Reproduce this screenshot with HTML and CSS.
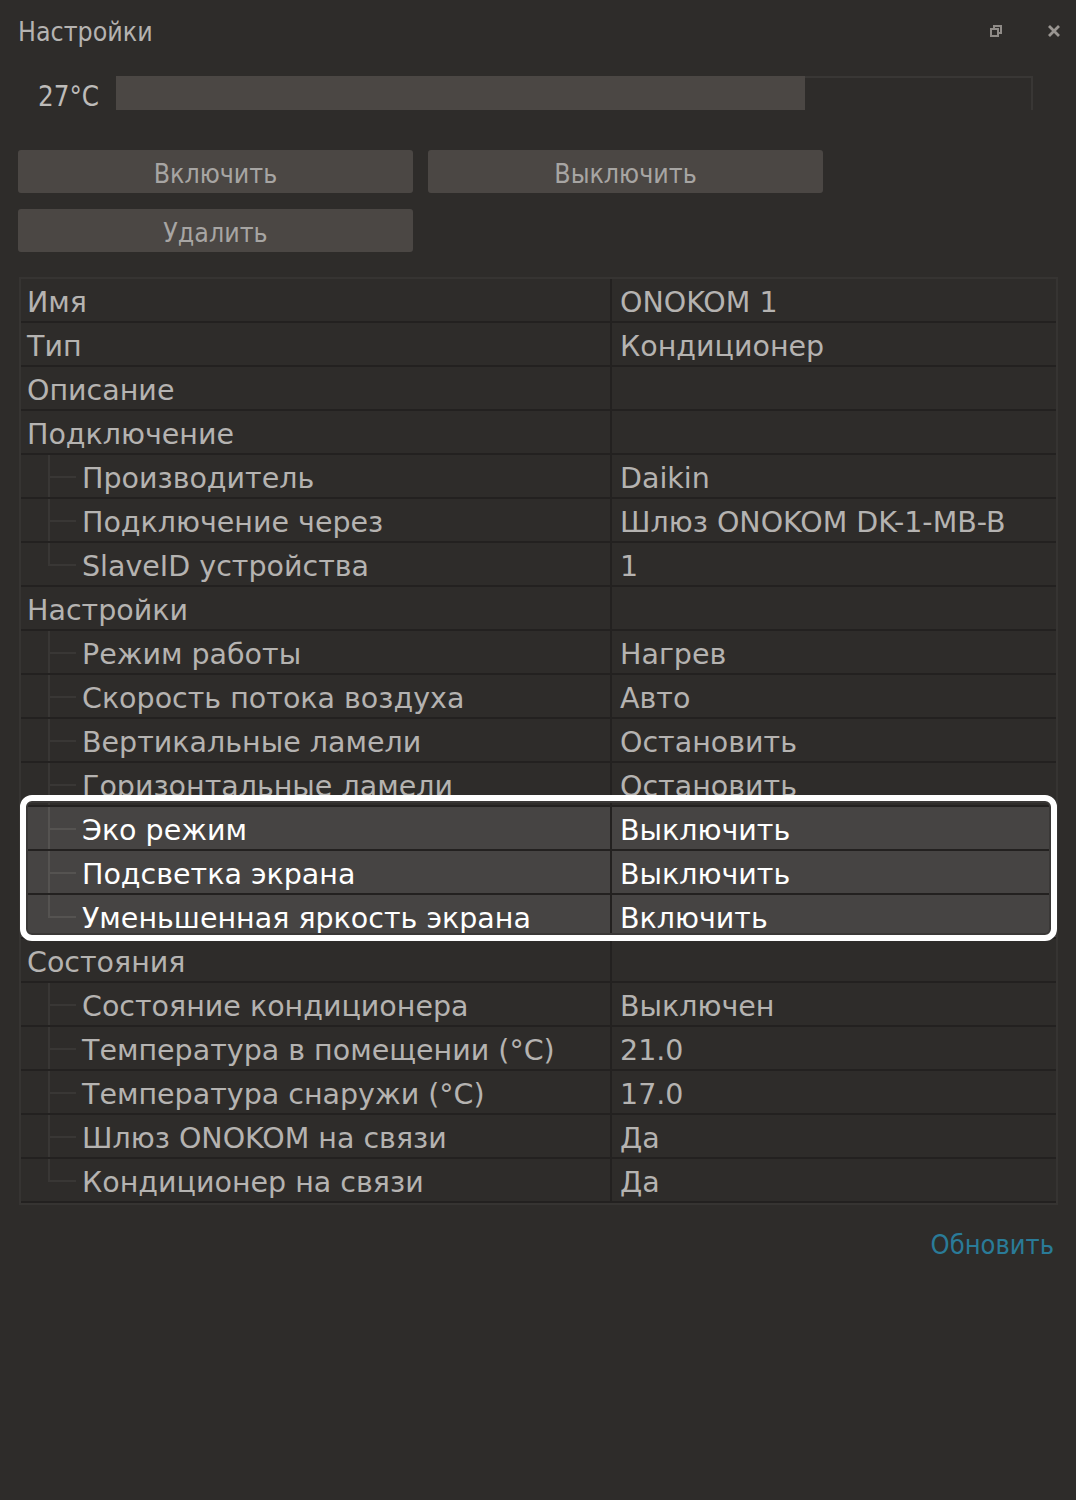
FILE: index.html
```html
<!DOCTYPE html>
<html lang="ru">
<head>
    <meta charset="UTF-8">
    <title>Настройки</title>
    <link rel="stylesheet" href="styles.css">
</head>
<body>
    <div class="panel">
        <div class="header">
            <span class="title">Настройки</span>
            <div class="win-icons">
                <svg class="ico" width="14" height="14" viewBox="0 0 14 14">
                    <rect x="5" y="2" width="7" height="7" fill="none" stroke="#8f8b87" stroke-width="2"/>
                    <rect x="2" y="5" width="7" height="7" fill="#2e2c2a" stroke="#8f8b87" stroke-width="2"/>
                </svg>
                <svg class="ico" width="14" height="14" viewBox="0 0 14 14">
                    <path d="M2 2 L12 12 M12 2 L2 12" stroke="#9a9692" stroke-width="2.8"/>
                </svg>
            </div>
        </div>

        <div class="temp">
            <span class="temp-val">27°C</span>
            <div class="track">
                <div class="fill" style="width: 75.3%"></div>
            </div>
        </div>

        <div class="buttons">
            <button>Включить</button>
            <button>Выключить</button>
            <button>Удалить</button>
        </div>

        <div class="props">
            <div class="row"><div class="k">Имя</div><div class="v">ONOKOM 1</div></div>
            <div class="row"><div class="k">Тип</div><div class="v">Кондиционер</div></div>
            <div class="row"><div class="k">Описание</div><div class="v"></div></div>
            <div class="row"><div class="k">Подключение</div><div class="v"></div></div>
            <div class="row child"><div class="k">Производитель</div><div class="v">Daikin</div></div>
            <div class="row child"><div class="k">Подключение через</div><div class="v">Шлюз ONOKOM DK-1-MB-B</div></div>
            <div class="row child last"><div class="k">SlaveID устройства</div><div class="v">1</div></div>
            <div class="row"><div class="k">Настройки</div><div class="v"></div></div>
            <div class="row child"><div class="k">Режим работы</div><div class="v">Нагрев</div></div>
            <div class="row child"><div class="k">Скорость потока воздуха</div><div class="v">Авто</div></div>
            <div class="row child"><div class="k">Вертикальные ламели</div><div class="v">Остановить</div></div>
            <div class="row child"><div class="k">Горизонтальные ламели</div><div class="v">Остановить</div></div>
            <div class="row child hl"><div class="k">Эко режим</div><div class="v">Выключить</div></div>
            <div class="row child hl"><div class="k">Подсветка экрана</div><div class="v">Выключить</div></div>
            <div class="row child last hl"><div class="k">Уменьшенная яркость экрана</div><div class="v">Включить</div></div>
            <div class="row"><div class="k">Состояния</div><div class="v"></div></div>
            <div class="row child"><div class="k">Состояние кондиционера</div><div class="v">Выключен</div></div>
            <div class="row child"><div class="k">Температура в помещении (°C)</div><div class="v">21.0</div></div>
            <div class="row child"><div class="k">Температура снаружи (°C)</div><div class="v">17.0</div></div>
            <div class="row child"><div class="k">Шлюз ONOKOM на связи</div><div class="v">Да</div></div>
            <div class="row child last"><div class="k">Кондиционер на связи</div><div class="v">Да</div></div>

            <!-- рамка выделения поверх строк -->
            <div class="frame"></div>
        </div>

        <div class="footer">
            <a href="#" class="refresh">Обновить</a>
        </div>
    </div>
</body>
</html>
```

FILE: styles.css
```css
* {
    margin: 0;
    padding: 0;
    box-sizing: border-box;
}

body {
    background: #2e2c2a;
    color: #b5b3b1;
    font-family: "DejaVu Sans Condensed", "DejaVu Sans", sans-serif;
    height: 1500px;
}

.panel {
    padding: 0 18px 0 18px;
}

.header {
    display: flex;
    align-items: center;
    justify-content: space-between;
    height: 62px;
}

.title {
    font-size: 26.5px;
    color: #b5b3b1;
}

.win-icons {
    display: flex;
    gap: 44px;
    align-items: center;
    margin-right: -3px;
}

.ico {
    display: block;
}

.temp {
    display: flex;
    align-items: center;
    height: 34px;
    margin-top: 14px;
    padding-left: 20px;
}

.temp-val {
    font-size: 27.5px;
    width: 78px;
    color: #bdbbb9;
    padding-top: 5px;
}

.track {
    width: 917px;
    height: 34px;
    border-top: 2px solid #393735;
    border-right: 2px solid #393735;
    position: relative;
}

.fill {
    position: absolute;
    left: 0;
    top: -2px;
    bottom: 0;
    background: #4b4744;
}

.buttons {
    display: grid;
    grid-template-columns: 395px 395px;
    grid-auto-rows: 43px;
    column-gap: 15px;
    row-gap: 16px;
    margin-top: 40px;
}

button {
    background: #4b4744;
    border: none;
    border-radius: 3px;
    color: #a7a5a3;
    font-family: "DejaVu Sans Condensed", sans-serif;
    font-size: 26.5px;
    padding-top: 3px;
}

.props {
    position: relative;
    margin-top: 25px;
    margin-left: 1px;
    width: 1039px;
    border: 2px solid #363432;
    font-family: "DejaVu Sans", sans-serif;
    font-size: 28.5px;
}

.row {
    display: grid;
    grid-template-columns: 591px 1fr;
    height: 44px;
    border-bottom: 2px solid #232120;
}

.row:last-of-type {
    border-bottom: none;
}

.k, .v {
    display: flex;
    align-items: center;
    white-space: nowrap;
    overflow: hidden;
    padding-top: 5px;
}

.k {
    padding-left: 6px;
    border-right: 2px solid #232120;
    position: relative;
}

.v {
    padding-left: 8px;
}

.child .k {
    padding-left: 61px;
}

/* линии дерева */
.child .k::before {
    content: "";
    position: absolute;
    left: 27px;
    top: -2px;
    bottom: -2px;
    border-left: 2px solid #393735;
}

.child.last .k::before {
    bottom: 50%;
}

.child .k::after {
    content: "";
    position: absolute;
    left: 27px;
    width: 28px;
    top: 50%;
    border-top: 2px solid #393735;
}

.hl {
    background: #464443;
    color: #ffffff;
}

.hl .k::before, .hl .k::after {
    border-color: #555351;
}

.frame {
    position: absolute;
    left: -1px;
    right: -1px;
    top: 516px;
    height: 146px;
    border: 6px solid #ffffff;
    border-radius: 12px;
    box-shadow: inset 0 0 0 2px #3a3837;
    pointer-events: none;
}

.footer {
    display: flex;
    justify-content: flex-end;
    padding-top: 24px;
    padding-right: 4px;
}

.refresh {
    color: #2a7b98;
    font-size: 27px;
    text-decoration: none;
}
```
